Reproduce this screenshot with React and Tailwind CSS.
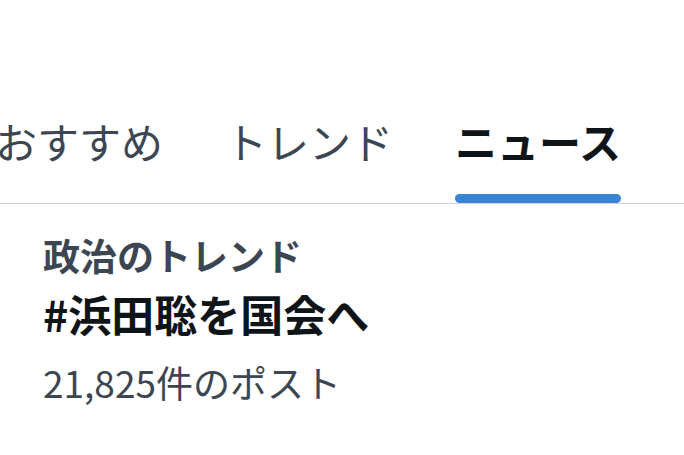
import React from "react";

const tabs = ["おすすめ", "トレンド", "ニュース"];

const App = () => {
    return (
        <div
            className="w-[684px] h-[455px] bg-white overflow-hidden"
            style={{ fontFamily: '"Noto Sans CJK JP", "Noto Sans", sans-serif' }}
        >
            {/* tab bar */}
            <div className="pt-[100px] border-b border-[#cfd3d6]">
                <div className="flex ml-[-36px]">
                    {tabs.map((tab, i) => {
                        const active = i === 2;
                        return (
                            <div key={tab} className="px-[31px] flex flex-col items-stretch">
                                <div
                                    className={`text-[42px] leading-[60px] pt-[11px] whitespace-nowrap ${
                                        active ? "font-bold text-[#0f1419]" : "text-[#3c4652]"
                                    }`}
                                >
                                    {tab}
                                </div>
                                <div
                                    className={`h-[9px] mt-[23px] mb-0 rounded-full ${
                                        active ? "bg-[#3a84d4]" : "bg-transparent"
                                    }`}
                                />
                            </div>
                        );
                    })}
                </div>
            </div>

            {/* trend item */}
            <div className="pl-[43px] pt-[27px]">
                <div className="text-[37px] leading-[48px] font-bold text-[#3c4652]">政治のトレンド</div>
                <div className="text-[43px] leading-[68px] font-bold text-[#0f1419]">#浜田聡を国会へ</div>
                <div className="text-[37px] leading-[70px] text-[#3c4652]">21,825件のポスト</div>
            </div>
        </div>
    );
};

export default App;
